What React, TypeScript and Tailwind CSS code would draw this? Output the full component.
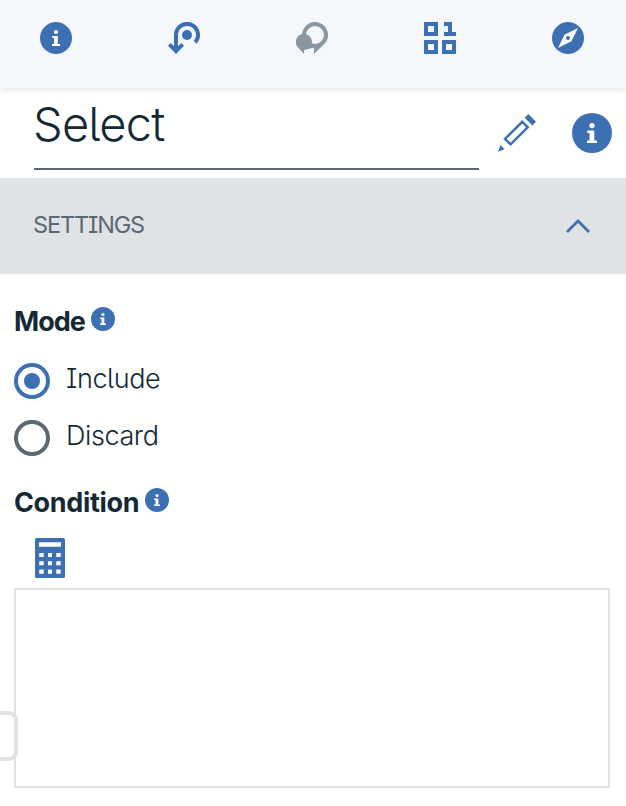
import React, { useState } from "react";

function Info({ className }: { className: string }) {
  return (
    <svg viewBox="0 0 32 32" className={className} aria-label="Information">
      <circle cx="16" cy="16" r="16" fill="#3d70b2" />
      <circle cx="16" cy="10" r="2.1" fill="#fff" />
      <path d="M12.2 14h5.6v8H20v2h-8v-2h2v-6h-1.8z" fill="#fff" />
    </svg>
  );
}

function StepBack() {
  return (
    <svg viewBox="0 0 32 32" className="size-8">
      <circle cx="19" cy="13" r="5" fill="#3d70b2" />
      <path d="M8 30V13a11 11 0 1 1 19.2 7.3" fill="none" stroke="#3d70b2" strokeWidth="4" />
      <path d="M0 23.7 2.7 21 6 24.3h4l3.3-3.3 2.7 2.7L8 32z" fill="#3d70b2" />
    </svg>
  );
}

function Markers() {
  return (
    <svg viewBox="0 0 32 32" className="size-8" fill="#8897a2">
      <path fillRule="evenodd" d="M6 13a13 13 0 1 1 22.3 9.1L18 32v-6.2A13 13 0 0 1 6 13zm4 0a9 9 0 1 0 18 0 9 9 0 1 0-18 0z" />
      <path d="M8 12a8 8 0 0 1 6.3 12.8c2 .5 3.2-.3 4.7 1L16 26l-3.5 1L8 28.1V32l-5.7-6.3A8 8 0 0 1 8 12z" />
    </svg>
  );
}

function Grid() {
  return (
    <svg viewBox="0 0 32 32" className="size-8" shapeRendering="crispEdges">
      <path d="M2 2h10v10H2zM2 20h10v10H2zM20 20h10v10H20z" fill="none" stroke="#3d70b2" strokeWidth="4" />
      <path d="M20 0h8v10h4v4H20v-4h4V4h-4z" fill="#3d70b2" />
    </svg>
  );
}

function Compass() {
  return (
    <svg viewBox="0 0 32 32" className="size-8">
      <circle cx="16" cy="16" r="16" fill="#3d70b2" />
      <path d="M6 26l6.5-13.2L26 6l-6.6 13.3z" fill="#fff" />
      <circle cx="16" cy="16" r="2" fill="#3d70b2" />
    </svg>
  );
}

function Pencil() {
  return (
    <svg viewBox="0 0 40 40" className="size-10" fill="#3d70b2">
      <path d="M31.3 2 39 9.8l-3.7 3.7-7.6-7.8z" />
      <path d="M25.3 9.8 30.8 15.2 13.6 32.3 8 27z" fill="none" stroke="#3d70b2" strokeWidth="2.4" />
      <path d="M3.5 33 7.5 37.3 1 39.7z" />
    </svg>
  );
}

function Calculator() {
  return (
    <svg viewBox="0 0 30 40" className="h-10 w-[30px]">
      <rect width="30" height="40" rx="1.5" fill="#3d70b2" />
      <path
        d="M4 4.3h22v4.4H4zM4.3 15h4.4v4H4.3zM13 15h4v4h-4zM21.3 15h4.4v4h-4.4zM4.3 23.3h4.4v4H4.3zM13 23.3h4v4h-4zM21.3 23.3h4.4v4h-4.4zM4.3 31.5h4.4v4.2H4.3zM13 31.5h4v4.2h-4zM21.3 31.5h4.4v4.2h-4.4z"
        fill="#fff"
      />
    </svg>
  );
}

function Radio({ label, checked, onSelect }: { label: string; checked: boolean; onSelect: () => void }) {
  return (
    <button type="button" role="radio" aria-checked={checked} onClick={onSelect} className="flex h-9 items-center gap-4 text-left">
      <span className={`flex size-9 items-center justify-center rounded-full border-4 ${checked ? "border-[#3d70b2]" : "border-[#5a6872]"}`}>
        {checked && <span className="size-4 rounded-full bg-[#3d70b2]" />}
      </span>
      <span className="-mt-[5px] text-[27px] leading-9 font-light tracking-[-0.4px]">{label}</span>
    </button>
  );
}

export default function App() {
  const [mode, setMode] = useState("Include");
  return (
    <div className="relative h-[806px] w-[626px] overflow-hidden bg-white font-['Inter',sans-serif] text-[#152935] [font-feature-settings:'cv08','cv05']">
      <header className="flex h-[88px] items-start justify-between bg-[#f4f7fb] px-10 pt-[22px] shadow-[0_2px_6px_rgba(0,0,0,0.1)]">
        <Info className="size-8" />
        <StepBack />
        <Markers />
        <Grid />
        <div className="mr-[2px]"><Compass /></div>
      </header>

      <div className="flex h-[90px] pl-[34px]">
        <h1 className="-ml-px h-[82px] w-[446px] bg-[linear-gradient(#5a6872,#5a6872)] bg-[length:445px_2px] bg-right-bottom bg-no-repeat pt-[7px] text-[47px] leading-[58px] font-light tracking-[-0.8px]">Select</h1>
        <div className="mt-6 ml-[18px]"><Pencil /></div>
        <Info className="mt-[25px] ml-[35px] size-10 shrink-0" />
      </div>

      <section className="flex h-24 items-center justify-between bg-[#dfe3e6] pr-9 pl-[33px]">
        <h2 className="-mt-[2px] text-[23.5px] leading-8 font-normal tracking-[-1.15px] text-[#5a6872]">SETTINGS</h2>
        <svg viewBox="0 0 24 14" className="h-[14px] w-6" fill="none" stroke="#3d70b2" strokeWidth="2.8">
          <path d="M1 13 12 2l11 11" />
        </svg>
      </section>

      <main className="px-[14px] pt-[30px]">
        <div className="flex h-9 items-start">
          <h3 className="w-[77px] text-[27px] leading-9 font-bold tracking-[-1px]">Mode</h3>
          <Info className="mt-[3px] size-6" />
        </div>
        <div role="radiogroup" className="mt-[23px] flex flex-col gap-[21px]">
          <Radio label="Include" checked={mode === "Include"} onSelect={() => setMode("Include")} />
          <Radio label="Discard" checked={mode === "Discard"} onSelect={() => setMode("Discard")} />
        </div>
        <div className="mt-[29px] flex h-9 items-start">
          <h3 className="w-[131px] text-[27px] leading-9 font-bold tracking-[-0.35px]">Condition</h3>
          <Info className="mt-[3px] size-6" />
        </div>
        <div className="mt-[17px] ml-[21px] h-10"><Calculator /></div>
        <div className="mt-[10px] h-[200px] w-[596px] border-2 border-[#dfe3e6]" />
      </main>

      <div className="absolute top-[711px] -left-5 h-[50px] w-[38px] rounded-[9px] border-4 border-[#dfe3e6] bg-white" />
    </div>
  );
}
